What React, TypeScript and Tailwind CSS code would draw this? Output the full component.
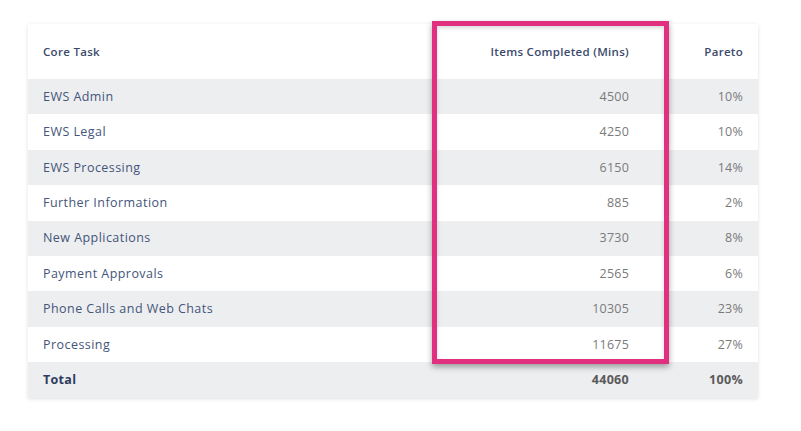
const rows = [
  { task: "EWS Admin", items: "4500", pareto: "10%" },
  { task: "EWS Legal", items: "4250", pareto: "10%" },
  { task: "EWS Processing", items: "6150", pareto: "14%" },
  { task: "Further Information", items: "885", pareto: "2%" },
  { task: "New Applications", items: "3730", pareto: "8%" },
  { task: "Payment Approvals", items: "2565", pareto: "6%" },
  { task: "Phone Calls and Web Chats", items: "10305", pareto: "23%" },
  { task: "Processing", items: "11675", pareto: "27%" },
];

export default function App() {
  return (
    <div className="h-[431px] w-[801px] bg-white pl-[28px] pt-[24px] font-['Open_Sans',sans-serif]">
      <div className="relative w-[730px] bg-white shadow-[0_1px_4px_rgba(0,0,0,0.12)]">
        <div className="grid h-[55px] grid-cols-[416px_200px_114px] items-center text-[11.5px] font-semibold tracking-[0.3px] text-[#3b4a6b]">
          <div className="px-[15px]">Core Task</div>
          <div className="px-[15px] text-right">Items Completed (Mins)</div>
          <div className="px-[15px] text-right">Pareto</div>
        </div>
        {rows.map((r, i) => (
          <div
            key={r.task}
            className={`grid h-[35.4px] grid-cols-[416px_200px_114px] items-center pt-[1px] text-[12.5px] ${
              i % 2 === 0 ? "bg-[#edeef0]" : "bg-white"
            }`}
          >
            <div className="px-[15px] tracking-[0.45px] text-[#44557a]">{r.task}</div>
            <div className="px-[15px] text-right tracking-[0.2px] text-[#7a7a7a]">{r.items}</div>
            <div className="px-[15px] text-right tracking-[0.2px] text-[#7a7a7a]">{r.pareto}</div>
          </div>
        ))}
        <div className="grid h-[35.4px] grid-cols-[416px_200px_114px] items-center bg-[#edeef0] pt-[1px] text-[12.5px] font-bold tracking-[0.3px]">
          <div className="px-[15px] text-[#2c3b5e]">Total</div>
          <div className="px-[15px] text-right text-[#5a5a5a]">44060</div>
          <div className="px-[15px] text-right text-[#5a5a5a]">100%</div>
        </div>
        <div className="absolute left-[404px] top-[-3px] h-[343px] w-[237px] border-[5px] border-[#e0307f] shadow-[0_3px_6px_rgba(0,0,0,0.35),inset_0_2px_4px_rgba(0,0,0,0.15)]" />
      </div>
    </div>
  );
}
